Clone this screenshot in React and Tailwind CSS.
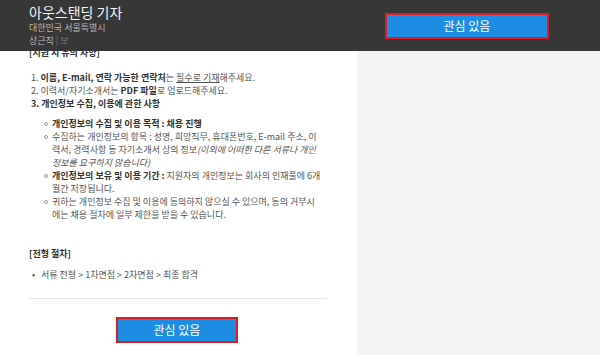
function Circle() {
  return (
    <span className="w-[8px] shrink-0 flex pt-[5px]">
      <span className="w-[4px] h-[4px] rounded-full border border-[#999]"></span>
    </span>
  );
}

export default function App() {
  const font = { fontFamily: '"Noto Sans CJK KR", "Noto Sans", sans-serif' };
  return (
    <div className="relative w-[600px] h-[355px] overflow-hidden bg-[#f3f3f3]" style={font}>
      {/* sticky header over content */}
      <div className="absolute top-0 left-0 right-0 h-[51px] bg-[#373737] z-10 flex items-start">
        <div className="pl-[29px] pt-[3px] w-[357px]">
          <div className="text-[14px] leading-[18px] text-[#f2f2f2]">아웃스탠딩 기자</div>
          <div className="text-[9px] leading-[12px] text-[#b5b5b5] mt-[1px]">대한민국 서울특별시</div>
          <div className="text-[9px] leading-[12px] text-[#b5b5b5] mt-[1px]">
            상근직<span className="text-[#777]"> | 보</span>
          </div>
        </div>
        <div className="pt-[12px] pl-[28px]">
          <button className="w-[164px] h-[26px] bg-[#1d8de4] border-2 border-[#e21b23] text-white text-[12px] leading-none">
            관심 있음
          </button>
        </div>
      </div>

      <div className="flex h-full">
        <div className="w-[357px] bg-white pl-[29px] pr-[30px] pt-[46px] text-[9px] leading-[13px] text-[#555]">
          <div className="font-bold text-[#333]">[지원 시 유의 사항]</div>
          <ol className="mt-[12px] pl-[2px]">
            <li>
              1. <b className="text-[#333]">이름, E-mail, 연락 가능한 연락처</b>는{' '}
              <span className="underline">필수로 기재</span>해주세요.
            </li>
            <li>
              2. 이력서/자기소개서는 <b className="text-[#333]">PDF 파일</b>로 업로드해주세요.
            </li>
            <li className="font-bold text-[#333]">3. 개인정보 수집, 이용에 관한 사항</li>
          </ol>
          <ul className="mt-[7px] pl-[15px]">
            <li className="flex">
              <Circle />
              <b className="text-[#333]">개인정보의 수집 및 이용 목적 : 채용 진행</b>
            </li>
            <li className="flex">
              <Circle />
              <span>
                수집하는 개인정보의 항목 : 성명, 희망직무, 휴대폰번호, E-mail 주소, 이<br />
                력서, 경력사항 등 자기소개서 상의 정보<i>(이외에 어떠한 다른 서류나 개인<br />
                정보를 요구하지 않습니다)</i>
              </span>
            </li>
            <li className="flex">
              <Circle />
              <span>
                <b className="text-[#333]">개인정보의 보유 및 이용 기간 :</b> 지원자의 개인정보는 회사의 인재풀에 6개<br />
                월간 저장됩니다.
              </span>
            </li>
            <li className="flex">
              <Circle />
              <span>
                귀하는 개인정보 수집 및 이용에 동의하지 않으실 수 있으며, 동의 거부시<br />
                에는 채용 절차에 일부 제한을 받을 수 있습니다.
              </span>
            </li>
          </ul>
          <div className="mt-[26px] font-bold text-[#333]">[전형 절차]</div>
          <div className="mt-[8px] flex pl-[3px]">
            <span className="w-[9px] shrink-0">•</span>
            <span>서류 전형 &gt; 1차면접 &gt; 2차면접 &gt; 최종 합격</span>
          </div>
          <div className="mt-[17px] w-[298px] border-t border-[#e6e6e6]"></div>
          <div className="mt-[18px] pl-[87px]">
            <button className="w-[122px] h-[26px] bg-[#1d8de4] border-2 border-[#e21b23] text-white text-[12px] leading-none">
              관심 있음
            </button>
          </div>
        </div>
        <div className="flex-1 bg-[#f3f3f3]"></div>
      </div>
    </div>
  );
}
